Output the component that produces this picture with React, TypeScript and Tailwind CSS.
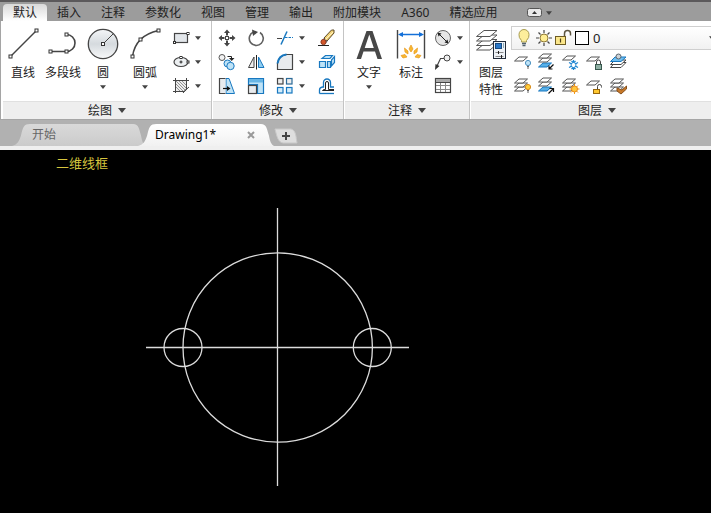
import { useState } from 'react';
import type { ReactNode } from 'react';

const INK = '#454545';
const BLUE = '#1878c0';
const PALE = '#bfe3f7';

const Ico = ({ children, size = 20 }: { children: ReactNode; size?: number }) => (
  <svg width={size} height={size} viewBox={`0 0 ${size} ${size}`} fill="none" stroke={INK} aria-hidden="true" className="shrink-0">
    {children}
  </svg>
);

// grip drawn on the ends of the geometry icons
const Grip = ({ x, y, s = 3 }: { x: number; y: number; s?: number }) => (
  <rect x={x - s / 2} y={y - s / 2} width={s} height={s} fill="#fff" stroke="#333" />
);

const LineIcon = () => (
  <Ico size={32}>
    <path d="M3.5 28.5 29.5 2.5" strokeWidth="1.4" />
    <Grip x={3.5} y={28.5} /><Grip x={29.5} y={2.5} />
  </Ico>
);

const PolylineIcon = () => (
  <Ico size={32}>
    <path d="M3.5 23.5H19.5A8.5 8.5 0 0 0 19.5 6.5" strokeWidth="1.6" />
    <Grip x={3.5} y={23.5} /><Grip x={19.5} y={23.5} /><Grip x={19.5} y={6.5} />
  </Ico>
);

const CircleIcon = () => (
  <Ico size={32}>
    <defs>
      <linearGradient id="disc" x1="0" y1="0" x2="0" y2="1">
        <stop offset="0" stopColor="#f4f6f8" /><stop offset=".5" stopColor="#d5dade" /><stop offset="1" stopColor="#f8f9fa" />
      </linearGradient>
    </defs>
    <circle cx="16" cy="16" r="14.7" fill="url(#disc)" strokeWidth="1.3" />
    <path d="M16 16 26 6" />
    <Grip x={16} y={16} />
  </Ico>
);

const ArcIcon = () => (
  <Ico size={32}>
    <path d="M3.5 28.5Q5 18 11.5 11.5 18 5 29.5 2.5" strokeWidth="1.6" />
    <Grip x={3.5} y={28.5} /><Grip x={11.5} y={11.5} /><Grip x={29.5} y={2.5} />
  </Ico>
);

const TextIcon = () => (
  <Ico size={32}>
    <path d="M3.5 31 13.5 3H19.5L29 31H24.5L22 23.5H10.5L8 31ZM11.7 20H20.8L16.3 6.5Z" fill="#484848" fillRule="evenodd" stroke="none" />
  </Ico>
);

const DimensionIcon = () => (
  <Ico size={32}>
    <path d="M2.5 2V30.5M29.5 2V30.5" strokeWidth="1.4" />
    <path d="M5 6.5H27" stroke="#1470d8" strokeWidth="1.5" />
    <path d="M3 6.5 8 4V9ZM29 6.5 24 4V9Z" fill="#1470d8" stroke="none" />
    <path d="M16 17 18 21 16 24 14 21ZM9.5 20 13 23 13 26 10 24ZM22.5 20 19 23 19 26 22 24ZM6 27.5 10 26.5 12 29 8 30ZM26 27.5 22 26.5 20 29 24 30Z" fill="#f8b830" stroke="#e89a20" strokeWidth=".7" />
  </Ico>
);

const LayerPropsIcon = () => (
  <Ico size={32}>
    {[16, 11.5, 7, 2.5].map(y => (
      <path key={y} d={`M9 ${y}H22L15 ${y + 6}H1.5Z`} fill="#fff" stroke="#555" />
    ))}
    <rect x="18.5" y="13.5" width="12" height="17" fill="#eef2f7" stroke="#222c3a" />
    <rect x="20.5" y="15.5" width="6" height="5" fill="#2a78c8" stroke="#174a80" />
    <path d="M28.5 15V20" stroke="#8ab" />
    <path d="M20.5 24.5H28.5M20.5 28.5H28.5" stroke="#888" />
    <path d="M23.5 23V26M26.5 27V30" stroke="#222" />
  </Ico>
);

const RectIcon = () => (
  <Ico>
    <rect x="3.5" y="5.5" width="13" height="9" fill="#e2e6ea" strokeWidth="1.2" />
    <Grip x={3.5} y={14.5} s={2} /><Grip x={17} y={5.5} s={2} />
  </Ico>
);

const EllipseIcon = () => (
  <Ico>
    <ellipse cx="10" cy="10" rx="7" ry="4.5" fill="#eceff1" strokeWidth="1.2" />
    <path d="M8.5 10H11.5M10 8.5V11.5" stroke="#222" />
    <Grip x={10} y={5.5} s={2} /><Grip x={17} y={10} s={2} />
  </Ico>
);

const HatchIcon = () => (
  <Ico>
    <rect x="4.5" y="4.5" width="11" height="11" fill="#ececec" stroke="none" />
    <path d="M5 8 12 15M5 5 15 15M8 5 15 12M5 11 9 15M11 5 15 9" stroke="#888" strokeWidth=".9" />
    <path d="M4.5 2V17M15.5 2V13L12 17M2 4.5H18M2 15.5H13L18 11" />
  </Ico>
);

const MoveIcon = () => (
  <Ico>
    <path d="M10 1.5 13 5H11V7.5H9V5H7ZM10 18.5 13 15H11V12.5H9V15H7ZM1.5 10 5 7V9H7.5V11H5V13ZM18.5 10 15 7V9H12.5V11H15V13Z" fill={INK} stroke="none" />
    <rect x="8.5" y="8.5" width="3" height="3" fill="#fff" />
  </Ico>
);

const RotateIcon = () => (
  <Ico>
    <path d="M14 4.5A7 7 0 1 1 7.5 4" strokeWidth="1.6" stroke="#606060" />
    <path d="M6 1.5 12 4 7 8Z" fill={INK} stroke="none" />
  </Ico>
);

const TrimIcon = () => (
  <Ico>
    <path d="M2 10.5H7" />
    <path d="M6 16.5 12 3.5" stroke={BLUE} strokeWidth="1.5" />
    <path d="M10 9.5H18" stroke={BLUE} strokeDasharray="2.5 1" />
  </Ico>
);

const EraseIcon = () => (
  <Ico>
    <path d="M0 17.5H11" stroke="#222" />
    <path d="M6 10 13.5 2 16 2V5L9 13Z" fill="#f3d377" stroke="#5c4a28" />
    <path d="M7 12 15 4" stroke="#fff3c4" />
    <path d="M5 11 9 14" stroke="#68798c" strokeWidth="2" />
    <circle cx="5.5" cy="14" r="2.6" fill="#d4572b" stroke="#8b3b22" />
  </Ico>
);

const CopyIcon = () => (
  <Ico>
    <circle cx="5" cy="5.5" r="3" fill="#f2f2f2" stroke="#555" />
    <path d="M10.5 4.5H14.5V7" stroke="#222" />
    <path d="M12 6H17.5L14.7 9Z" fill="#222" stroke="none" />
    <circle cx="10.5" cy="11.5" r="3.5" fill={PALE} stroke={BLUE} />
    <circle cx="13.5" cy="14" r="3.7" fill={PALE} stroke={BLUE} />
  </Ico>
);

const MirrorIcon = () => (
  <Ico>
    <path d="M8 5V15.5H2.5Z" fill="#eee" />
    <path d="M10.5 3V17.5" stroke="#222" />
    <path d="M12.5 5V15.5H18Z" fill="#8fcdf0" stroke={BLUE} />
  </Ico>
);

const FilletIcon = () => (
  <Ico>
    <path d="M2.5 17.5V11Q4 4 11 2.5H17.5V17.5Z" fill="#e8ebee" strokeWidth="1.2" />
    <path d="M2.5 11.5Q3.5 3.5 11.5 2.5" stroke={BLUE} strokeWidth="2" />
  </Ico>
);

const ExplodeIcon = () => (
  <Ico>
    <path d="M1.5 9.5H7.5V15.5H1.5ZM4 6.5 7.5 3.5H14.5L12 6.5ZM9.5 9.5H12.5V15.5H9.5ZM13.5 8 16.5 4.5V10.5L13.5 14Z" fill={PALE} stroke={BLUE} strokeWidth="1.2" />
  </Ico>
);

const StretchIcon = () => (
  <Ico>
    <path d="M9 2.5H12L17.5 17.5H9Z" fill={PALE} stroke={BLUE} />
    <path d="M8.5 2.5H2.5V17.5H8.5" fill="#e8ebee" strokeWidth="1.2" />
    <path d="M6 12.5H11" stroke="#111" strokeWidth="1.2" /><path d="M10 10 13.5 12.5 10 15Z" fill="#111" stroke="none" />
  </Ico>
);

const ScaleIcon = () => (
  <Ico>
    <path d="M2.5 8.5V2.5H17.5V17.5H11.5V8.5Z" fill={PALE} stroke={BLUE} strokeWidth="1.2" />
    <path d="M3 3H17V6.5H3Z" fill="#67b5e4" stroke="none" />
    <rect x="2.5" y="9.5" width="8" height="8" fill="#e8ebee" strokeWidth="1.2" />
  </Ico>
);

const ArrayIcon = () => (
  <Ico>
    <g fill="#eee" strokeWidth="1.2">
      <rect x="2.5" y="2.5" width="5.5" height="5.5" /><rect x="11.5" y="2.5" width="5.5" height="5.5" stroke="#2b6a98" />
    </g>
    <g fill="#d4edfb" stroke={BLUE} strokeWidth="1.2">
      <rect x="2.5" y="11.5" width="5.5" height="5.5" /><rect x="11.5" y="11.5" width="5.5" height="5.5" />
    </g>
  </Ico>
);

const OffsetIcon = () => (
  <Ico>
    <path d="M1.5 17.5V14Q1.5 11.5 4.5 11H5.5V6.5A3.5 3.5 0 0 1 12.5 6.5V11H16" stroke={BLUE} strokeWidth="1.3" />
    <path d="M16 14.5H4.5Q4.5 13.5 7.5 13.5V7A1.5 1.5 0 0 1 10.5 7V13.5H16" stroke="#222" />
    <path d="M1.5 17.5H16" stroke={BLUE} strokeWidth="1.3" />
  </Ico>
);

const DiameterIcon = () => (
  <Ico>
    <circle cx="10" cy="10" r="7.5" fill="#e6e6e6" stroke="#666" />
    <path d="M6 6 14 14" stroke="#222" />
    <path d="M4.5 4.5 8.5 5.5 5.5 8.5ZM15.5 15.5 11.5 14.5 14.5 11.5Z" fill="#222" stroke="none" />
  </Ico>
);

const LeaderIcon = () => (
  <Ico>
    <path d="M3.5 15 7.5 6.5H11" strokeWidth="1.2" />
    <path d="M2 18 2.5 12 6.5 14Z" fill="#333" stroke="none" />
    <circle cx="14" cy="6" r="3" fill="#f0f0f0" />
  </Ico>
);

const TableIcon = () => (
  <Ico>
    <rect x="2.5" y="2.5" width="15" height="14" fill="#fff" strokeWidth="1.2" />
    <path d="M3 3H17V6H3Z" fill="#aaa" stroke="none" />
    <path d="M3 6.5H17" stroke="#444" />
    <path d="M3 9.5H17M3 13.5H17M7.5 7V16M12.5 7V16" stroke="#888" />
  </Ico>
);

const Sheet = ({ y, fill = '#fff', stroke = '#555' }: { y: number; fill?: string; stroke?: string }) => (
  <path d={`M6 ${y}H14.5L10 ${y + 4}H1.5Z`} fill={fill} stroke={stroke} />
);
const Bulb = ({ x, y, fill }: { x: number; y: number; fill: string }) => (
  <g>
    <circle cx={x} cy={y} r="2.6" fill={fill} stroke={fill === PALE ? '#4a90c0' : '#d88a18'} />
    <path d={`M${x - 1} ${y + 3.5}H${x + 1}M${x - 1} ${y + 5}H${x + 1}`} stroke="#666" />
  </g>
);

const LayerOffIcon = () => <Ico><Sheet y={5} /><Bulb x={15} y={11} fill={PALE} /></Ico>;
const LayerOnIcon = () => <Ico><Sheet y={11} /><Sheet y={7} /><Sheet y={3} /><Bulb x={15} y={11} fill="#ffcf3a" /></Ico>;
const LayerIsoIcon = () => (
  <Ico>
    <Sheet y={11} fill="#58b0e8" stroke={BLUE} /><Sheet y={6} /><Sheet y={2} />
    <path d="M16.5 12.5 12.5 16.5M12 13.5V17H15.5" stroke="#111" strokeWidth="1.2" />
  </Ico>
);
const LayerUnisoIcon = () => (
  <Ico>
    <Sheet y={11} fill="#58b0e8" stroke={BLUE} /><Sheet y={6} /><Sheet y={2} />
    <path d="M11.5 17.5 16 13M12.5 12.5H16.5V16" stroke="#111" strokeWidth="1.2" />
  </Ico>
);
const LayerFreezeIcon = () => (
  <Ico>
    <Sheet y={4} />
    <path d="M12.5 8V18M8 10.5 17 15.5M8 15.5 17 10.5M10.5 9 12.5 11 14.5 9M10.5 17 12.5 15 14.5 17" stroke="#1d84d0" strokeWidth="1.2" />
    <circle cx="12.5" cy="13" r="2.5" fill="#fff" stroke="#1d84d0" />
  </Ico>
);
const LayerThawIcon = () => (
  <Ico>
    <Sheet y={11} /><Sheet y={7} /><Sheet y={3} />
    <path d="M13.5 8V18M8.5 13H18.5M10 9.5 17 16.5M17 9.5 10 16.5" stroke="#ec9a1b" />
    <circle cx="13.5" cy="13" r="3" fill="#ffc83c" stroke="#ec8a1b" />
  </Ico>
);
const LayerLockIcon = () => (
  <Ico>
    <Sheet y={5} />
    <path d="M11.5 12V10A2 2 0 0 1 15.5 10V12" />
    <rect x="10.5" y="12.5" width="6" height="5" fill="#8fb0a4" stroke="#38584e" />
  </Ico>
);
const LayerUnlockIcon = () => (
  <Ico>
    <Sheet y={5} />
    <path d="M12.5 13V10.5A2 2 0 0 1 16.5 10.5V11.5" />
    <rect x="8.5" y="13.5" width="6" height="4" fill="#ffc830" stroke="#96660c" />
  </Ico>
);
const LayerCurrentIcon = () => (
  <Ico>
    <path d="M6 10.5H17L12 15.5H1.5Z" fill="#fff" /><path d="M6 8H17L12 12.5H1.5Z" fill="#fff" />
    <path d="M6 5H17L12 9.5H1.5Z" fill="#70bff0" stroke={BLUE} />
    <circle cx="9.5" cy="4.5" r="2.5" fill="#ccd3d8" stroke="#59646c" />
  </Ico>
);
const LayerMatchIcon = () => (
  <Ico>
    <Sheet y={11} /><Sheet y={7} /><Sheet y={3} />
    <path d="M8 12 13 14 17.5 10V13L12 18 8 15Z" fill="#c77828" stroke="#87501c" />
  </Ico>
);

const BulbIcon = () => (
  <Ico>
    <path d="M7.5 12.5Q4.5 9.5 5 6.5A4.8 4.8 0 0 1 15 6.5Q15.5 9.5 12.5 12.5V14H7.5Z" fill="#fdee9b" stroke="#a89c50" />
    <path d="M8 15.5H12M8.5 17.5H11.5" stroke="#53626e" strokeWidth="1.4" />
  </Ico>
);
const SunIcon = () => (
  <Ico>
    <path d="M10 2V5M10 15V18M2 10H5M15 10H18M4.5 4.5 6.5 6.5M13.5 13.5 15.5 15.5M15.5 4.5 13.5 6.5M6.5 13.5 4.5 15.5" strokeWidth="1.2" />
    <circle cx="10" cy="10" r="4" fill="#ffee94" stroke="#8d7735" />
  </Ico>
);
const UnlockIcon = () => (
  <Ico>
    <path d="M10.5 9V5.5A3 3 0 0 1 16.5 5.5V7.5" stroke="#5d5540" strokeWidth="1.5" />
    <rect x="1.5" y="8.5" width="10" height="8" fill="#fbe68a" stroke="#6d5b22" />
    <path d="M6.5 10.5V14.5" stroke="#4d3f18" strokeWidth="1.2" />
  </Ico>
);

const Caret = ({ big }: { big?: boolean }) => (
  <svg width={big ? 8 : 6} height={big ? 5 : 4} viewBox="0 0 8 5" fill="#444" aria-hidden="true"><path d="M0 0H8L4 5Z" /></svg>
);

const BigButton = ({ icon, label, caret, width = 'w-10' }: { icon: ReactNode; label: string; caret?: boolean; width?: string }) => (
  <button type="button" className={`${width} flex flex-col items-center pt-[7px]`}>
    {icon}
    <span className="mt-1 leading-[17px]">{label}</span>
    {caret && <span className="mt-1"><Caret /></span>}
  </button>
);

const Tool = ({ name, icon, caret }: { name: string; icon: ReactNode; caret?: boolean }) => (
  <button type="button" aria-label={name} title={name} className="h-6 flex items-center">
    {icon}
    {caret && <span className="w-[14px] flex justify-center"><Caret /></span>}
  </button>
);

const Panel = ({ title, children, className = 'border-r' }: { title: string; children: ReactNode; className?: string }) => (
  <section className={`flex flex-col border-[#c4c4c4] bg-white ${className}`}>
    <div className="h-20 flex">{children}</div>
    <button type="button" className="h-[18px] w-full flex items-center justify-center gap-[6px] bg-[#eeeeee] border-t border-[#e0e0e0]">
      {title}
      <Caret big />
    </button>
  </section>
);

const menus = ['默认', '插入', '注释', '参数化', '视图', '管理', '输出', '附加模块', 'A360', '精选应用'];

const layerTools = [
  { name: '关', icon: <LayerOffIcon /> },
  { name: '隔离', icon: <LayerIsoIcon /> },
  { name: '冻结', icon: <LayerFreezeIcon /> },
  { name: '锁定', icon: <LayerLockIcon /> },
  { name: '置为当前', icon: <LayerCurrentIcon /> },
  { name: '打开所有图层', icon: <LayerOnIcon /> },
  { name: '取消隔离', icon: <LayerUnisoIcon /> },
  { name: '解冻所有图层', icon: <LayerThawIcon /> },
  { name: '解锁', icon: <LayerUnlockIcon /> },
  { name: '匹配图层', icon: <LayerMatchIcon /> },
];

const MenuBar = () => {
  const [active, setActive] = useState('默认');
  return (
    <nav className="h-[21px] flex items-end pl-[3px] bg-[#9c9c9c] border-t-2 border-[#5b595b] overflow-hidden">
      {menus.map(m => (
        <button
          key={m}
          type="button"
          onClick={() => setActive(m)}
          className={`h-[17px] px-[10px] leading-[17px] shrink-0 ${m === active ? 'rounded-t-sm bg-linear-to-b from-[#d9d9d9] to-white' : ''}`}
        >
          {m}
        </button>
      ))}
      <button type="button" aria-label="最小化功能区" className="h-[17px] ml-5 flex items-center gap-1">
        <svg width="15" height="9" viewBox="0 0 15 9" aria-hidden="true">
          <rect x=".5" y=".5" width="14" height="8" rx="2" fill="#e8e8e8" stroke="#555" />
          <path d="M5 6H10L7.5 3Z" fill="#333" />
        </svg>
        <Caret />
      </button>
    </nav>
  );
};

const Ribbon = () => (
  <div className="flex gap-px pl-[2px] bg-white border-l border-b border-[#a5a5a5] overflow-hidden">
    <Panel title="绘图">
      <BigButton icon={<LineIcon />} label="直线" />
      <BigButton icon={<PolylineIcon />} label="多段线" />
      <BigButton icon={<CircleIcon />} label="圆" caret />
      <BigButton icon={<ArcIcon />} label="圆弧" caret width="w-11" />
      <div className="flex flex-col pt-[5px] pl-1 pr-[6px]">
        <Tool name="矩形" icon={<RectIcon />} caret />
        <Tool name="椭圆" icon={<EllipseIcon />} caret />
        <Tool name="图案填充" icon={<HatchIcon />} caret />
      </div>
    </Panel>

    <Panel title="修改">
      <div className="grid grid-cols-[20px_20px_34px_20px] gap-x-[9px] content-start pt-[5px] pl-1 pr-[5px]">
        <Tool name="移动" icon={<MoveIcon />} />
        <Tool name="旋转" icon={<RotateIcon />} />
        <Tool name="修剪" icon={<TrimIcon />} caret />
        <Tool name="删除" icon={<EraseIcon />} />
        <Tool name="复制" icon={<CopyIcon />} />
        <Tool name="镜像" icon={<MirrorIcon />} />
        <Tool name="圆角" icon={<FilletIcon />} caret />
        <Tool name="分解" icon={<ExplodeIcon />} />
        <Tool name="拉伸" icon={<StretchIcon />} />
        <Tool name="缩放" icon={<ScaleIcon />} />
        <Tool name="阵列" icon={<ArrayIcon />} caret />
        <Tool name="偏移" icon={<OffsetIcon />} />
      </div>
    </Panel>

    <Panel title="注释">
      <BigButton icon={<TextIcon />} label="文字" caret width="w-12" />
      <BigButton icon={<DimensionIcon />} label="标注" width="w-9" />
      <div className="flex flex-col pt-[5px] pl-1 pr-[2px]">
        <Tool name="直径" icon={<DiameterIcon />} caret />
        <Tool name="引线" icon={<LeaderIcon />} caret />
        <Tool name="表格" icon={<TableIcon />} />
      </div>
    </Panel>

    <Panel title="图层" className="flex-1 min-w-[252px]">
      <button type="button" className="w-10 shrink-0 flex flex-col items-center pt-[7px] leading-[17px]">
        <LayerPropsIcon />
        <span className="mt-1">图层</span>
        <span>特性</span>
      </button>
      <div className="flex-1 pt-[5px]">
        <div className="h-6 flex items-center pl-[2px] border border-r-0 border-[#cfcfcf] bg-linear-to-b from-white to-[#f1f1f1]">
          <button type="button" aria-label="开/关图层"><BulbIcon /></button>
          <button type="button" aria-label="在所有视口中冻结或解冻"><SunIcon /></button>
          <button type="button" aria-label="锁定或解锁图层"><UnlockIcon /></button>
          <span className="size-[14px] ml-px border border-black bg-white" />
          <select aria-label="图层" className="flex-1 ml-1 h-5 appearance-none bg-transparent leading-5 text-[13px]">
            <option>0</option>
          </select>
          <span className="pr-2"><Caret /></span>
        </div>
        <div className="grid grid-cols-[repeat(5,24px)]">
          {layerTools.map(t => (
            <button key={t.name} type="button" aria-label={t.name} title={t.name} className="h-6 flex items-center justify-center">{t.icon}</button>
          ))}
        </div>
      </div>
    </Panel>
  </div>
);

const TabShape = ({ active }: { active?: boolean }) => (
  <svg className="absolute inset-0 size-full" viewBox="0 0 134 23" preserveAspectRatio="none" aria-hidden="true">
    <defs>
      <linearGradient id={active ? 'tabOn' : 'tabOff'} x1="0" y1="0" x2="0" y2="1">
        <stop offset="0" stopColor={active ? '#ffffff' : '#d9d9d9'} />
        <stop offset="1" stopColor={active ? '#f1f1f1' : '#cbcbcb'} />
      </linearGradient>
    </defs>
    <path d="M0 23C6 21 7 18 9 12 11 3 12 0 18 0H121C127 0 127 6 129 12 130 18 131 21 134 23Z" fill={`url(#${active ? 'tabOn' : 'tabOff'})`} />
  </svg>
);

const FileTabs = () => (
  <div className="h-[30px] flex items-end pl-3 pb-1 bg-[#b1b1b1] relative">
    <span className="absolute inset-x-0 bottom-0 h-1 bg-[#efefef]" />
    <button type="button" className="relative w-[134px] h-[22px] pl-5 text-left text-[#666]">
      <TabShape />
      <span className="relative">开始</span>
    </button>
    <div className="relative w-[136px] h-[22px] -ml-2 pl-[17px] pr-[19px] flex items-center justify-between">
      <TabShape active />
      <button type="button" className="relative text-black">Drawing1*</button>
      <button type="button" aria-label="关闭 Drawing1" className="relative">
        <svg width="8" height="8" viewBox="0 0 8 8" stroke="#999" strokeWidth="2" aria-hidden="true"><path d="M1 1 7 7M7 1 1 7" /></svg>
      </button>
    </div>
    <button type="button" aria-label="新图形" className="mb-[2px]">
      <svg width="24" height="16" viewBox="0 0 24 16" aria-hidden="true">
        <path d="M1 1H17C22 2 22 9 23 15H9C4 14 3 9 1 1Z" fill="#dedede" stroke="#c9c9c9" />
        <path d="M8 8H16M12 4V12" stroke="#444" strokeWidth="2" />
      </svg>
    </button>
  </div>
);

export default function App() {
  return (
    <div className="min-h-screen flex flex-col bg-black font-['Noto_Sans','Noto_Sans_CJK_SC',sans-serif] text-xs text-[#222]">
      <MenuBar />
      <Ribbon />
      <FileTabs />
      <main className="flex-1 bg-black overflow-hidden">
        <button type="button" className="block pl-14 pt-1 leading-[18px] text-[13px] text-[#d6c63e]">二维线框</button>
        <svg width="420" height="320" viewBox="0 172 420 320" fill="none" stroke="#dcdcdc" strokeWidth="1.3" role="img" aria-label="图形">
          <path d="M146 347.5H409M277.5 208V486" />
          <circle cx="277.7" cy="347.5" r="94.7" />
          <circle cx="183" cy="347.5" r="19" />
          <circle cx="372.3" cy="347.5" r="19" />
        </svg>
      </main>
    </div>
  );
}
